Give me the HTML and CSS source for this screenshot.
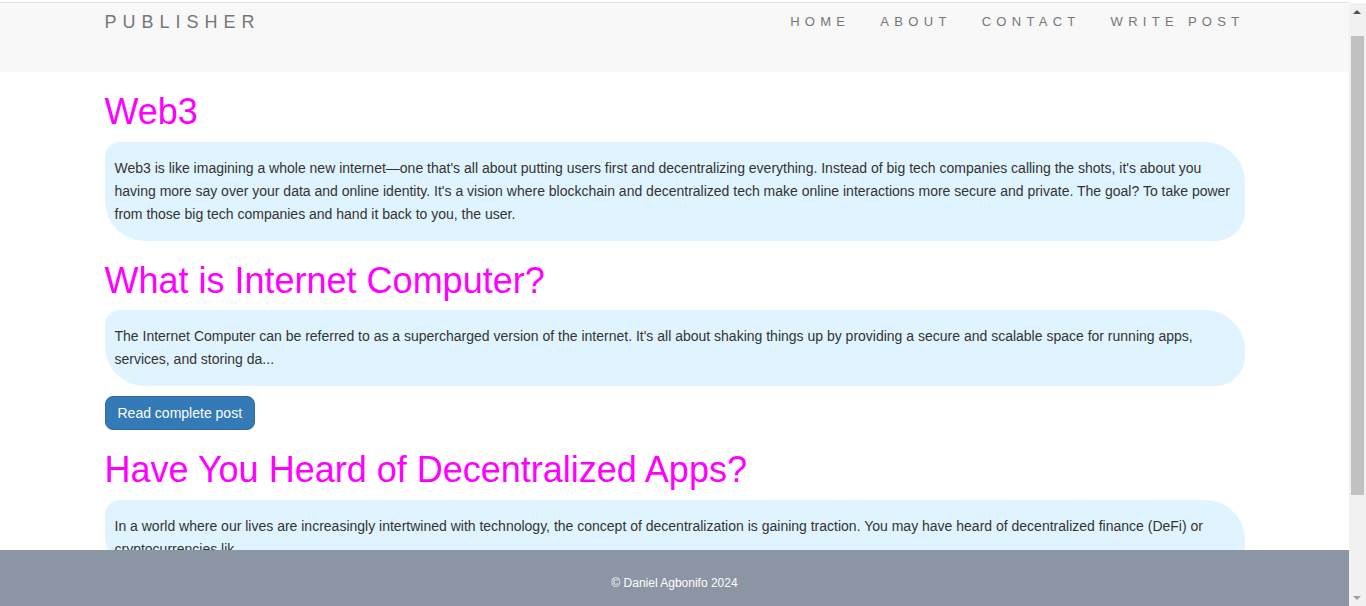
FILE: index.html
```html
<!DOCTYPE html>
<html lang="en">
<head>
<meta charset="utf-8">
<title>Publisher</title>
<link rel="stylesheet" href="styles.css">
</head>
<body>
<header class="site-header">
  <div class="container header-inner">
    <a class="brand" href="#">PUBLISHER</a>
    <ul class="nav">
      <li><a href="#">HOME</a></li>
      <li><a href="#">ABOUT</a></li>
      <li><a href="#">CONTACT</a></li>
      <li><a href="#">WRITE POST</a></li>
    </ul>
  </div>
</header>

<main class="container">
  <article class="post">
    <h1 class="post-title">Web3</h1>
    <p class="post-body">Web3 is like imagining a whole new internet—one that's all about putting users first and decentralizing everything. Instead of big tech companies calling the shots, it's about you having more say over your data and online identity. It's a vision where blockchain and decentralized tech make online interactions more secure and private. The goal? To take power from those big tech companies and hand it back to you, the user.</p>
  </article>

  <article class="post">
    <h1 class="post-title">What is Internet Computer?</h1>
    <p class="post-body">The Internet Computer can be referred to as a supercharged version of the internet. It's all about shaking things up by providing a secure and scalable space for running apps, services, and storing da...</p>
    <a class="btn" href="#">Read complete post</a>
  </article>

  <article class="post">
    <h1 class="post-title">Have You Heard of Decentralized Apps?</h1>
    <p class="post-body">In a world where our lives are increasingly intertwined with technology, the concept of decentralization is gaining traction. You may have heard of decentralized finance (DeFi) or cryptocurrencies lik...</p>
    <a class="btn" href="#">Read complete post</a>
  </article>
</main>

<footer class="site-footer">
  <p class="copyright">© Daniel Agbonifo 2024</p>
</footer>

<div class="scrollbar" aria-hidden="true">
  <span class="arrow arrow-up"></span>
  <span class="thumb"></span>
  <span class="arrow arrow-down"></span>
</div>
</body>
</html>
```

FILE: styles.css
```css
body {
  margin: 0 17px 0 0;
  font-family: "Liberation Sans", Arial, Helvetica, sans-serif;
  font-size: 14px;
  line-height: 20px;
  color: #333;
  background: #fff;
  padding-bottom: 125px;
}

.container {
  width: 1140px;
  padding: 0 15px;
  margin: 0 auto;
}

.site-header {
  margin-top: 2px;
  border-top: 1px solid #e4e4e4;
  background: #f8f8f8;
  height: 69px;
}

.header-inner {
  display: flex;
  justify-content: space-between;
  align-items: flex-start;
  padding-top: 9px;
}

.brand {
  font-size: 18px;
  line-height: 20px;
  letter-spacing: 6px;
  color: #777;
  text-decoration: none;
}

.nav {
  display: flex;
  list-style: none;
  margin: 0 -15px 0 0;
  padding: 0;
}

.nav a {
  display: block;
  padding: 0 15px;
  font-size: 13px;
  line-height: 20px;
  letter-spacing: 5.3px;
  color: #777;
  text-decoration: none;
}

.post-title {
  margin: 20px 0 10px;
  font-size: 36px;
  line-height: 1.1;
  font-weight: 400;
  color: #ff00ff;
}

.post-body {
  margin: 0 0 10px;
  padding: 15px 10px;
  line-height: 23px;
  background: #dff4fe;
  border-radius: 15px 40px 30px 40px;
}

.btn {
  display: inline-block;
  padding: 6px 12px;
  font-size: 14px;
  line-height: 20px;
  color: #fff;
  background: #337ab7;
  border: 1px solid #2e6da4;
  border-radius: 8px;
  text-decoration: none;
}

.site-footer {
  position: fixed;
  left: 0;
  right: 17px;
  bottom: 0;
  height: 56px;
  background: #8c95a3;
  text-align: center;
}

.copyright {
  margin: 0;
  padding-top: 23px;
  font-size: 12px;
  line-height: 20px;
  color: #fff;
}

/* drawn scrollbar, as seen in the reference capture */
.scrollbar {
  position: fixed;
  top: 3px;
  right: 0;
  bottom: 0;
  width: 17px;
  background: #f1f1f1;
}

.thumb {
  position: absolute;
  left: 2px;
  right: 2px;
  top: 33px;
  height: 459px;
  background: #c1c1c1;
}

.arrow {
  position: absolute;
  left: 4px;
  width: 0;
  height: 0;
  border-left: 4px solid transparent;
  border-right: 4px solid transparent;
}

.arrow-up {
  top: 7px;
  border-bottom: 4px solid #505050;
}

.arrow-down {
  bottom: 6px;
  border-top: 4px solid #a3a3a3;
}
```
